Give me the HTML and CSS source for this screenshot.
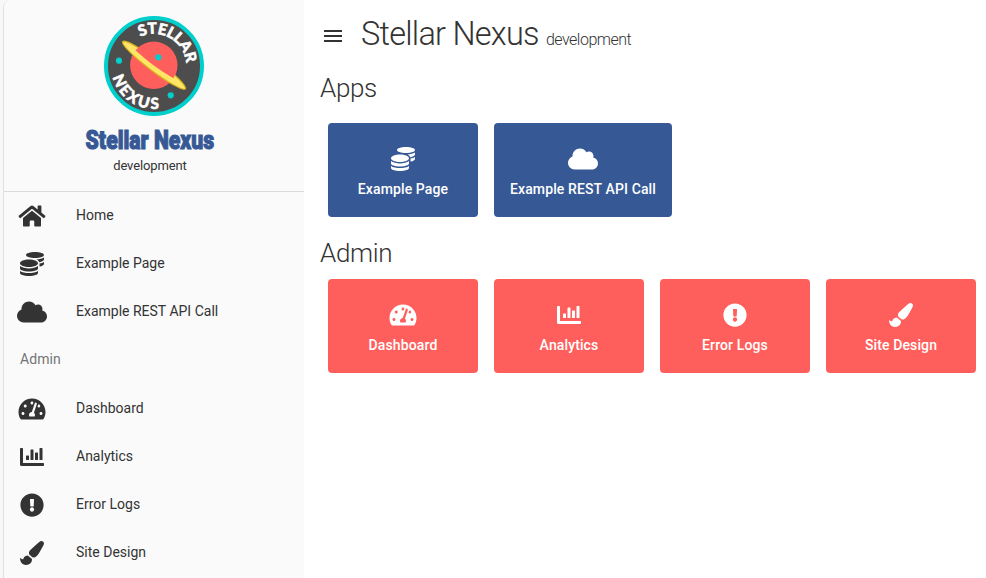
FILE: index.html
```html
<!DOCTYPE html>
<html lang="en">
<head>
<meta charset="utf-8">
<title>Stellar Nexus</title>
<link rel="stylesheet" href="styles.css">
</head>
<body>
<svg class="sprite" aria-hidden="true">
  <symbol id="home" viewBox="0 0 576 512"><path d="M280.37 148.26L96 300.11V464a16 16 0 0 0 16 16l112.06-.29a16 16 0 0 0 15.92-16V368a16 16 0 0 1 16-16h64a16 16 0 0 1 16 16v95.64a16 16 0 0 0 16 16.05L464 480a16 16 0 0 0 16-16V300L295.67 148.26a12.19 12.19 0 0 0-15.3 0zM571.6 251.47L488 182.56V44.05a12 12 0 0 0-12-12h-56a12 12 0 0 0-12 12v72.61L318.47 43a48 48 0 0 0-61 0L4.34 251.47a12 12 0 0 0-1.6 16.9l25.5 31A12 12 0 0 0 45.15 301l235.22-193.74a12.19 12.19 0 0 1 15.3 0L530.9 301a12 12 0 0 0 16.9-1.6l25.5-31a12 12 0 0 0-1.7-16.93z"/></symbol>
  <symbol id="coins" viewBox="0 0 512 512"><path d="M0 405.3V448c0 35.3 86 64 192 64s192-28.7 192-64v-42.7C342.7 434.4 267.2 448 192 448S41.3 434.4 0 405.3zM320 128c106 0 192-28.7 192-64S426 0 320 0 128 28.7 128 64s86 64 192 64zM0 300.4V352c0 35.3 86 64 192 64s192-28.7 192-64v-51.6c-41.3 34-116.9 51.6-192 51.6S41.3 334.4 0 300.4zm416 11c57.3-11.1 96-31.7 96-55.4v-42.7c-23.2 16.4-57.3 27.6-96 34.5v63.6zM192 160C86 160 0 195.8 0 240s86 80 192 80 192-35.8 192-80-86-80-192-80zm219.3 56.3c60-10.8 100.7-32 100.7-56.3v-42.7c-35.5 25.1-96.5 38.6-160.7 41.8 29.5 14.3 51.2 33.5 60 57.2z"/></symbol>
  <symbol id="cloud" viewBox="0 0 640 512"><path d="M537.6 226.6c4.1-10.7 6.4-22.4 6.4-34.6 0-53-43-96-96-96-19.7 0-38.1 6-53.3 16.2C367 64.2 315.3 32 256 32c-88.4 0-160 71.6-160 160 0 2.7.1 5.4.2 8.1C40.2 219.8 0 273.2 0 336c0 79.5 64.5 144 144 144h368c70.7 0 128-57.3 128-128 0-61.9-44-113.6-102.4-125.4z"/></symbol>
  <symbol id="gauge" viewBox="0 0 576 512"><path d="M288 32C128.94 32 0 160.94 0 320c0 52.8 14.25 102.26 39.06 144.8 5.61 9.62 16.3 15.2 27.44 15.2h443c11.14 0 21.83-5.58 27.44-15.2C561.75 422.26 576 372.8 576 320c0-159.06-128.94-288-288-288zm0 64c14.71 0 26.58 10.13 30.32 23.65-1.11 2.26-2.64 4.23-3.45 6.67l-9.22 27.67c-5.13 3.49-10.97 6.01-17.64 6.01-17.67 0-32-14.33-32-32S270.33 96 288 96zM96 384c-17.67 0-32-14.33-32-32s14.33-32 32-32 32 14.33 32 32-14.33 32-32 32zm48-160c-17.67 0-32-14.33-32-32s14.33-32 32-32 32 14.33 32 32-14.33 32-32 32zm246.77-72.41l-61.33 184C343.13 347.33 352 364.54 352 384c0 11.72-3.38 22.55-8.88 32H232.88c-5.5-9.45-8.88-20.28-8.88-32 0-33.94 26.5-61.43 59.9-63.59l61.34-184.01c4.17-12.56 17.73-19.45 30.36-15.17 12.57 4.19 19.35 17.79 15.17 30.36zm14.66 57.2l15.52-46.55c3.47-1.29 7.13-2.23 11.05-2.23 17.67 0 32 14.33 32 32s-14.33 32-32 32c-11.38-.01-20.89-6.28-26.57-15.22zM480 384c-17.67 0-32-14.33-32-32s14.33-32 32-32 32 14.33 32 32-14.33 32-32 32z"/></symbol>
  <symbol id="chart" viewBox="0 0 512 512"><path d="M332.8 320h38.4c6.4 0 12.8-6.4 12.8-12.8V172.8c0-6.4-6.4-12.8-12.8-12.8h-38.4c-6.4 0-12.8 6.4-12.8 12.8v134.4c0 6.4 6.4 12.8 12.8 12.8zm96 0h38.4c6.4 0 12.8-6.4 12.8-12.8V76.8c0-6.4-6.4-12.8-12.8-12.8h-38.4c-6.4 0-12.8 6.4-12.8 12.8v230.4c0 6.4 6.4 12.8 12.8 12.8zm-288 0h38.4c6.4 0 12.8-6.4 12.8-12.8v-70.4c0-6.4-6.4-12.8-12.8-12.8h-38.4c-6.4 0-12.8 6.4-12.8 12.8v70.4c0 6.4 6.4 12.8 12.8 12.8zm96 0h38.4c6.4 0 12.8-6.4 12.8-12.8V108.8c0-6.4-6.4-12.8-12.8-12.8h-38.4c-6.4 0-12.8 6.4-12.8 12.8v198.4c0 6.4 6.4 12.8 12.8 12.8zM496 384H64V80c0-8.84-7.16-16-16-16H16C7.16 64 0 71.16 0 80v336c0 17.67 14.33 32 32 32h464c8.84 0 16-7.16 16-16v-32c0-8.84-7.16-16-16-16z"/></symbol>
  <symbol id="alert" viewBox="0 0 512 512"><path d="M504 256c0 136.997-111.043 248-248 248S8 392.997 8 256C8 119.083 119.043 8 256 8s248 111.083 248 248zm-248 50c-25.405 0-46 20.595-46 46s20.595 46 46 46 46-20.595 46-46-20.595-46-46-46zm-43.673-165.346l7.418 136c.347 6.364 5.609 11.346 11.982 11.346h48.546c6.373 0 11.635-4.982 11.982-11.346l7.418-136c.375-6.874-5.098-12.654-11.982-12.654h-63.383c-6.884 0-12.356 5.78-11.981 12.654z"/></symbol>
  <symbol id="brush" viewBox="0 0 512 512"><path d="M167.02 309.34c-40.12 2.58-76.53 17.86-97.19 72.3-2.35 6.21-8 9.98-14.59 9.98-11.11 0-45.46-27.67-55.25-34.35C0 439.62 37.93 512 128 512c75.86 0 128-43.77 128-120.19 0-3.11-.65-6.08-.97-9.13l-88.01-73.34zM457.89 0c-15.16 0-29.37 6.71-40.21 16.45C213.27 199.05 192 203.34 192 257.09c0 13.7 3.25 26.76 8.73 38.7l63.82 53.18c7.21 1.8 14.64 3.03 22.39 3.03 62.11 0 98.11-45.47 211.16-256.46 7.38-14.35 13.9-29.85 13.9-45.99C512 20.64 486 0 457.89 0z"/></symbol>
</svg>
<div class="app">
  <aside class="sidebar">
    <header class="brand">
      <svg class="logo" viewBox="0 0 100 100">
        <defs>
          <path id="arc-top" d="M34.7 21.7A32.2 32.2 0 0 1 82.1 52"/>
          <path id="arc-bottom" d="M8.6 61.1A43 43 0 0 0 60 91.8"/>
        </defs>
        <circle cx="50" cy="50" r="48" fill="#4d4d4d" stroke="#00cfcb" stroke-width="4"/>
        <circle cx="49.8" cy="49.3" r="23.7" fill="#ff5f5c"/>
        <ellipse cx="50" cy="49.2" rx="39.2" ry="5.6" transform="rotate(37 50 49.2)" fill="#ffe566" stroke="#d4b31c" stroke-width="1.2"/>
        <path d="M31.5 34.3A23.7 23.7 0 0 1 69.4 62.3Q48.7 50.5 31.5 34.3Z" fill="#ff5f5c"/>
        <g fill="#00cfcb"><circle cx="15" cy="44.7" r="3.1"/><circle cx="54.3" cy="41.3" r="3.1"/><circle cx="66.7" cy="79.3" r="3.1"/></g>
        <text class="logo-text"><textPath href="#arc-top" startOffset="1.5" textLength="62">STELLAR</textPath></text>
        <text class="logo-text"><textPath href="#arc-bottom" textLength="61">NEXUS</textPath></text>
      </svg>
      <h2 class="brand-name">Stellar Nexus</h2>
      <p class="brand-env">development</p>
    </header>
    <nav class="menu">
      <a class="item"><span class="slot"><svg class="icon w27"><use href="#home"/></svg></span><span class="label">Home</span></a>
      <a class="item"><span class="slot"><svg class="icon"><use href="#coins"/></svg></span><span class="label">Example Page</span></a>
      <a class="item"><span class="slot"><svg class="icon w30"><use href="#cloud"/></svg></span><span class="label">Example REST API Call</span></a>
      <div class="group">Admin</div>
      <a class="item"><span class="slot"><svg class="icon w27"><use href="#gauge"/></svg></span><span class="label">Dashboard</span></a>
      <a class="item"><span class="slot"><svg class="icon"><use href="#chart"/></svg></span><span class="label">Analytics</span></a>
      <a class="item"><span class="slot"><svg class="icon"><use href="#alert"/></svg></span><span class="label">Error Logs</span></a>
      <a class="item"><span class="slot"><svg class="icon"><use href="#brush"/></svg></span><span class="label">Site Design</span></a>
    </nav>
  </aside>
  <main class="content">
    <header class="topbar">
      <svg class="burger" viewBox="0 0 24 24"><path d="M3 18h18v-2H3v2zm0-5h18v-2H3v2zm0-7v2h18V6H3z"/></svg>
      <h1 class="title">Stellar Nexus <small>development</small></h1>
    </header>
    <h2 class="section apps-title">Apps</h2>
    <div class="cards apps">
      <a class="card"><svg class="icon"><use href="#coins"/></svg>Example Page</a>
      <a class="card"><svg class="icon w30"><use href="#cloud"/></svg>Example REST API Call</a>
    </div>
    <h2 class="section admin-title">Admin</h2>
    <div class="cards admin">
      <a class="card"><svg class="icon w27"><use href="#gauge"/></svg>Dashboard</a>
      <a class="card"><svg class="icon"><use href="#chart"/></svg>Analytics</a>
      <a class="card"><svg class="icon"><use href="#alert"/></svg>Error Logs</a>
      <a class="card"><svg class="icon"><use href="#brush"/></svg>Site Design</a>
    </div>
  </main>
</div>
</body>
</html>
```
FILE: styles.css
```css
* { box-sizing: border-box; }
body { margin: 0; background: #f8f8f8; color: #333; font-family: Roboto, sans-serif; font-size: 14px; overflow: hidden; }
h1, h2, p { margin: 0; }
.sprite { display: none; }
.app { display: flex; height: 578px; margin-left: 3px; border-left: 1px solid #e0e0e0; border-top-left-radius: 8px; background: #fff; overflow: hidden; }
.sidebar { width: 300px; flex: none; background: #fafafa; }
.brand { height: 192px; padding-top: 16px; display: flex; flex-direction: column; align-items: center; border-bottom: 1px solid #dadada; padding-right: 8px; }
.logo { width: 100px; height: 100px; flex: none; margin-left: 8px; }
.logo-text { fill: #fff; stroke: #fff; stroke-width: .5px; font: 900 15.5px Lato, sans-serif; }
.brand-name { margin-top: 8px; height: 32px; line-height: 33px; font-size: 26px; font-weight: 900; color: #365996; white-space: nowrap; transform: scaleX(.815); -webkit-text-stroke: 1.1px #365996; }
.brand-env { margin-top: 1px; font-size: 13px; line-height: 18px; letter-spacing: -.12px; }
.item { display: flex; align-items: center; height: 48px; padding-left: 12px; }
.slot { width: 32px; display: flex; justify-content: center; margin-right: 28px; }
.label { margin-top: -2px; }
.icon { width: 24px; height: 24px; fill: currentColor; flex: none; }
.w27 { width: 28px; }
.w30 { width: 30px; }
.group { height: 49px; line-height: 46px; padding-left: 16px; color: #757575; letter-spacing: .1px; }
.content { flex: 1; padding-left: 16px; }
.topbar { display: flex; height: 70px; align-items: center; padding: 2px 0 0 1px; }
.burger { width: 24px; height: 24px; fill: #333; }
.title { margin: 2px 0 0 16px; font-size: 32.5px; font-weight: 300; line-height: 36px; letter-spacing: -.75px; }
.title small { font-size: 16px; letter-spacing: -.5px; }
.section { font-size: 26px; font-weight: 300; line-height: 36px; letter-spacing: -.35px; }
.cards { display: flex; gap: 16px; padding-left: 8px; }
.card { display: flex; flex-direction: column; align-items: center; min-width: 150px; height: 94px; padding: 24px 16px 0; border-radius: 4px; color: #fff; font-weight: 500; line-height: 20px; letter-spacing: .12px; white-space: nowrap; }
.card .icon { margin-bottom: 8px; }
.apps .card { background: #365996; }
.admin .card { background: #ff5f5c; }
.apps { margin-top: 17px; }
.admin-title { margin-top: 18px; }
.admin { margin-top: 8px; }
```
